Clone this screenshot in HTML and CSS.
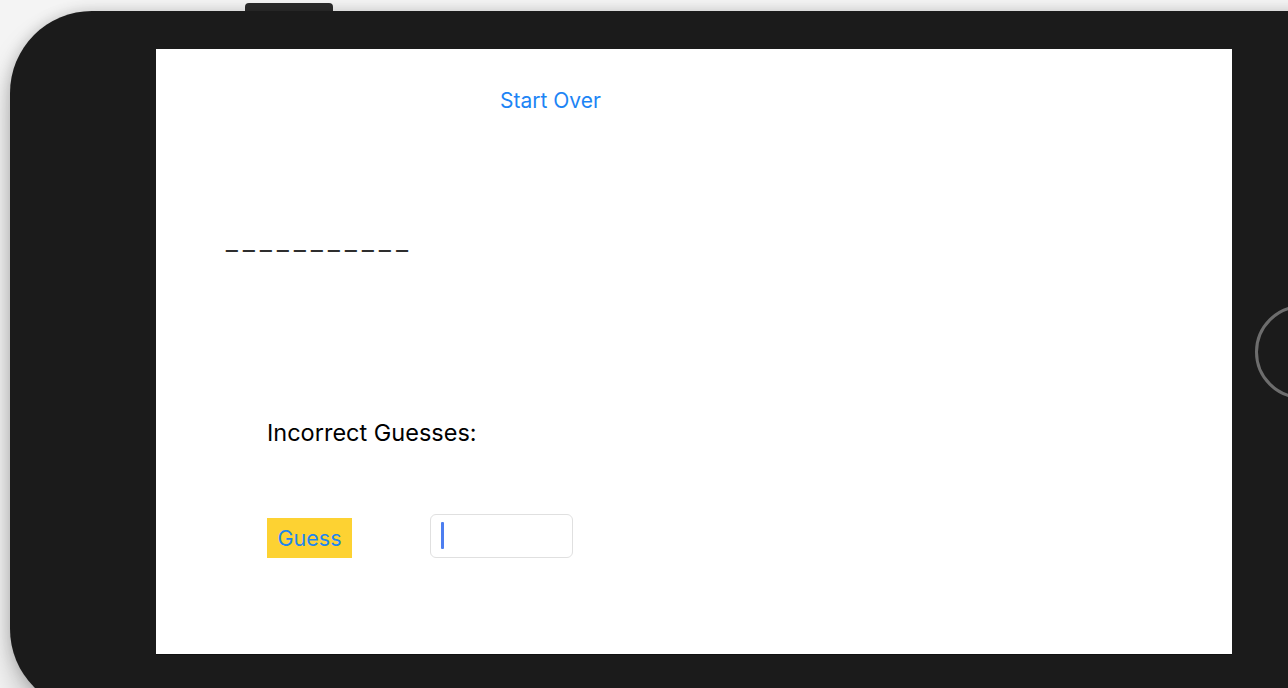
FILE: index.html
```html
<!DOCTYPE html>
<html lang="en">
<head>
<meta charset="utf-8">
<title>Hangman</title>
<link rel="stylesheet" href="styles.css">
</head>
<body>
  <div class="device">
    <div class="side-button"></div>
    <div class="screen">
      <div class="top-bar"><span class="start-over">Start Over</span></div>
      <div class="word">_ _ _ _ _ _ _ _ _ _ _</div>
      <div class="incorrect">Incorrect Guesses:</div>
      <div class="guess-row">
        <div class="guess-btn">Guess</div>
        <div class="field"><span class="cursor"></span></div>
      </div>
    </div>
    <div class="home-button"></div>
  </div>
</body>
</html>
```

FILE: styles.css
```css
html, body {
  margin: 0;
  height: 100%;
  overflow: hidden;
}
body {
  background: #f4f4f4;
  padding: 11px 0 0 10px;
  box-sizing: border-box;
}
.device {
  position: relative;
  width: 1420px;
  height: 700px;
  background: #1b1b1b;
  border-radius: 82px;
  padding: 38px 0 0 146px;
  box-sizing: border-box;
  box-shadow: 0 0 14px rgba(0,0,0,0.18), 0 18px 30px rgba(0,0,0,0.22);
}
.side-button {
  position: absolute;
  top: -8px;
  left: 235px;
  width: 88px;
  height: 12px;
  background: #2b2b2b;
  border-radius: 4px 4px 0 0;
  z-index: -1;
}
.home-button {
  position: absolute;
  left: 1245px;
  top: 294px;
  width: 88px;
  height: 88px;
  border: 3px solid #6d6d6d;
  border-radius: 50%;
}
.screen {
  width: 1076px;
  height: 605px;
  background: #fff;
  font-family: Inter, "Noto Sans", sans-serif;
  box-shadow: 0 1px 0 #111;
  display: flex;
  flex-direction: column;
}
.top-bar {
  padding: 38px 0 0 344px;
  height: 28px;
}
.start-over {
  color: #1c84f5;
  font-size: 21px;
  line-height: 28px;
}
.word {
  margin-top: 112px;
  padding-left: 70px;
  font-family: "Liberation Sans", sans-serif;
  font-weight: bold;
  font-size: 21px;
  line-height: 28px;
  color: #2e2e2e;
  word-spacing: -0.5px;
  text-shadow: 0 0.6px 0 #2e2e2e;
}
.incorrect {
  margin-top: 164px;
  padding-left: 111px;
  font-size: 23.5px;
  line-height: 28px;
  color: #000;
}
.guess-row {
  margin-top: 67px;
  padding-left: 111px;
  display: flex;
  align-items: flex-start;
  gap: 78px;
}
.guess-btn {
  margin-top: 4px;
  width: 85px;
  height: 40px;
  background: #fdd232;
  color: #1f86ee;
  font-size: 21.5px;
  display: flex;
  align-items: center;
  justify-content: center;
}
.field {
  width: 143px;
  height: 44px;
  border: 1px solid #e0e0e0;
  border-radius: 6px;
  box-sizing: border-box;
  padding: 7px 0 0 10px;
}
.cursor {
  display: block;
  width: 3px;
  height: 27px;
  background: #4d7ef0;
  border-radius: 1px;
}
```
